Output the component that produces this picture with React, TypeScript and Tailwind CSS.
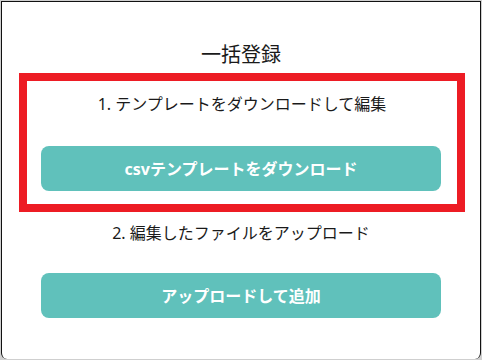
export default function App() {
  const font = { fontFamily: '"Noto Sans", "Noto Sans CJK JP", sans-serif' }
  return (
    <div className="w-[482px] h-[360px] bg-[#cfcfcf] pl-px pt-px overflow-hidden" style={font}>
      <div className="w-[480px] h-[358px] bg-white border-l border-t border-r border-[#111] rounded-b-[6px] flex flex-col items-center text-[#1a1a1a]">
        <h2 className="mt-[39px] text-[20px] leading-[28px]">一括登録</h2>
        <div className="mt-1 self-start ml-[17px] w-[446px] border-8 border-[#ed1c24] pt-[11px] pb-[13px]">
          <p className="text-center text-[16px] leading-[24px]">1. テンプレートをダウンロードして編集</p>
          <button className="mt-[30px] ml-[14px] w-[400px] h-[45px] rounded-[8px] bg-[#60c1bb] text-white text-[16px] font-bold">
            csvテンプレートをダウンロード
          </button>
        </div>
        <p className="mt-[9px] text-center text-[16px] leading-[24px]">2. 編集したファイルをアップロード</p>
        <button className="mt-[28px] w-[400px] h-[45px] rounded-[8px] bg-[#60c1bb] text-white text-[16px] font-bold">
          アップロードして追加
        </button>
      </div>
    </div>
  )
}
